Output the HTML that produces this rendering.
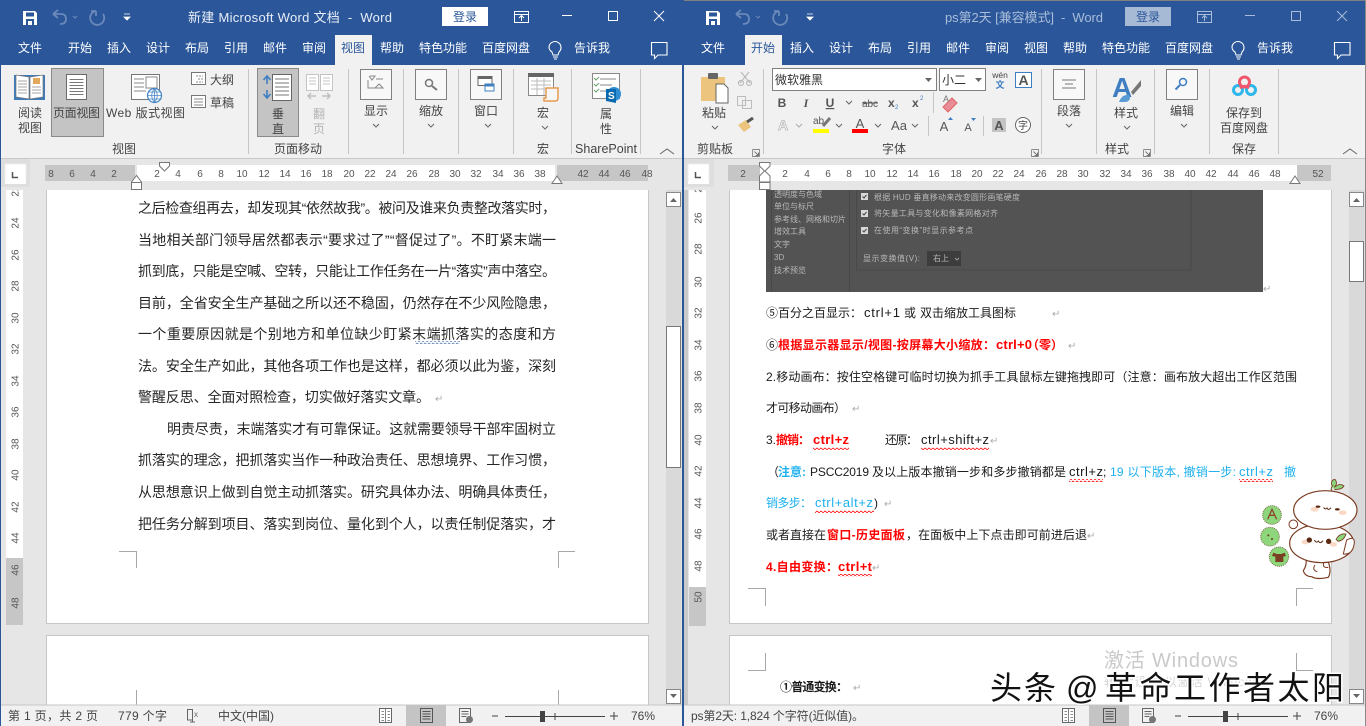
<!DOCTYPE html>
<html lang="zh"><head><meta charset="utf-8"><title>Word</title>
<style>
html,body{margin:0;padding:0;background:#e6e6e6;width:1366px;height:726px;overflow:hidden}
svg{display:block;position:absolute;left:0;top:0}
text{font-family:"Liberation Sans","Noto Sans CJK SC",sans-serif;white-space:pre}
.m{text-anchor:middle}
.t{font-size:12px;fill:#fff}
.l{font-size:12px;fill:#444}
.a{font-size:12px;fill:#2b579a}
.r{font-size:10px;fill:#555;text-anchor:middle}
.d{font-size:14px;fill:#262626}
.e{font-size:12px;fill:#1a1a1a}
.x{font-size:13px}
.b{font-weight:bold;fill:#f00}
.c{fill:#1fb0ee}
.p{font-size:10px;fill:#aaa}
.s{font-size:12px;fill:#444}
.g{font-size:8px;fill:#b8b8b8}
.ln{stroke:#c6c6c6;stroke-width:1;fill:none}
.bx{fill:#fff;stroke:#808080;stroke-width:1}
.cv{fill:none;stroke:#666;stroke-width:1}
</style></head><body>
<svg xmlns="http://www.w3.org/2000/svg" width="1366" height="726" viewBox="0 0 1366 726">
<defs>
<pattern id="w" width="4" height="3" patternUnits="userSpaceOnUse"><path d="M0 2L1 1L3 2.6L4 2" fill="none" stroke="#f00" stroke-width=".8"/></pattern>
<pattern id="wb" width="4" height="3" patternUnits="userSpaceOnUse"><path d="M0 2L1 1L3 2.6L4 2" fill="none" stroke="#5b7fb5" stroke-width=".8"/></pattern>
<g id="save"><path d="M0 0H12L14 2V14H0Z" fill="#fff"/><rect x="3" y="1.5" width="8" height="4" fill="#2b579a"/><rect x="3" y="8" width="8" height="6" fill="#2b579a"/><rect x="5" y="10" width="4" height="4" fill="#fff"/></g>
<g id="qat"><path d="M53 14L58 10M53 14L58 18M53 14H61Q66 14 66 19Q66 24 60 24" fill="none" stroke="#6a89ba" stroke-width="1.8"/><path d="M73 16l2 2 2-2" fill="none" stroke="#6a89ba"/><path d="M96 11A7 7 0 1 0 103 14M96 11V16M96 11H91" fill="none" stroke="#6a89ba" stroke-width="1.8"/><path d="M124 14h6M124 17h6l-3 3z" fill="#fff" stroke="#fff" stroke-width=".8"/></g>
<g id="bulb"><path d="M0 6A6 6 0 1 1 10 11L9 14H4L3 11A6 6 0 0 1 0 6ZM4 16H9M5 18H8" fill="none" stroke="#fff" stroke-width="1.1"/></g>
<g id="cmt"><path d="M.5 .5H16V13H7L3.5 16.5V13H.5Z" fill="none" stroke="#fff" stroke-width="1.1"/></g>
<path id="ch" d="M0 0l3 3 3-3" fill="none" stroke="#666"/>
<path id="drop" d="M0 0h7l-3.500 4z" fill="#666"/>
<g id="launch"><path d="M0 0H7V7M0 0V7H7" fill="none" stroke="#888" stroke-width=".9"/><path d="M2 2L6 6M6 3V6H3" fill="none" stroke="#555" stroke-width=".8"/></g>
<g id="cup"><path d="M0 5L7 0L14 5" fill="none" stroke="#666" stroke-width="1"/></g>
<g id="pl"><path d="M0 0H20V25H0Z" fill="#fff" stroke="#6a6a6a"/><path d="M3 5H17M3 8H17M3 11H17M3 14H17M3 17H17M3 20H17" stroke="#777" stroke-width="1"/></g>
<g id="rd"><rect width="12" height="14" fill="#fff" stroke="#666"/><path d="M6 0V14M2 3H4.500M2 6H4.500M2 9H4.500M2 12H4.500M8 3H10.500M8 6H10.500M8 9H10.500M8 12H10.500" stroke="#666" stroke-width=".8"/></g>
<g id="pr"><rect width="12" height="14" fill="none" stroke="#555"/><path d="M2 3H10M2 5.500H10M2 8H10M2 10.500H10" stroke="#555"/></g>
<g id="wb2"><rect width="11" height="14" fill="none" stroke="#666"/><path d="M2 3H9M2 5.500H9M2 8H7" stroke="#666"/><circle cx="10" cy="11" r="3.500" fill="#777"/></g>
</defs>

<!-- left window -->
<rect x="0" y="0" width="684" height="726" fill="#e6e6e6"/>
<rect x="0" y="0" width="684" height="65" fill="#2b579a"/>
<rect x="0" y="65" width="684" height="93" fill="#f1f1f1"/>
<rect x="0" y="158" width="684" height="1" fill="#c8c8c8"/>
<use href="#save" x="23" y="11"/><use href="#qat"/>
<text class="t" x="188" y="22" textLength="204" style="fill:#e8eef7;font-size:13px">新建 Microsoft Word 文档  -  Word</text>
<rect x="442" y="7" width="46" height="19" fill="#fff"/>
<text class="a m" x="465" y="21">登录</text>
<path d="M514.500 11.500H528.500V22.500H514.500ZM514.500 14.500H528.500M521.500 21V16M519 18L521.500 15.500L524 18" fill="none" stroke="#fff"/>
<path d="M562 15.500H572" stroke="#fff"/>
<rect x="608.500" y="11.500" width="9" height="9" fill="none" stroke="#fff"/>
<path d="M654 11L664 21M664 11L654 21" stroke="#fff" stroke-width="1"/>
<rect x="335" y="35" width="37" height="30" fill="#f1f1f1"/>
<text class="t" x="18" y="52">文件</text><text class="t" x="68" y="52">开始</text><text class="t" x="107" y="52">插入</text><text class="t" x="146" y="52">设计</text><text class="t" x="185" y="52">布局</text><text class="t" x="224" y="52">引用</text><text class="t" x="263" y="52">邮件</text><text class="t" x="302" y="52">审阅</text><text class="a" x="341" y="52">视图</text><text class="t" x="380" y="52">帮助</text><text class="t" x="419" y="52">特色功能</text><text class="t" x="482" y="52">百度网盘</text><text class="t" x="574" y="52">告诉我</text>
<use href="#bulb" x="549" y="41"/><use href="#cmt" x="651" y="42"/>

<!-- left ribbon: view -->
<path d="M14 75H45V100H14Z" fill="#3d7ab8"/><path d="M16 75L29 77V99L16 97ZM43 75L30 77V99L43 97Z" fill="#fff" stroke="#777" stroke-width=".7"/><path d="M18 81H27M18 84H27M18 87H27M18 90H27M18 93H27M32 87H41M32 90H41M32 93H41" stroke="#888" stroke-width=".8"/><rect x="33" y="78" width="7" height="6" fill="#e3a85c"/>
<rect x="51.500" y="68.500" width="52" height="68" fill="#c4c4c4" stroke="#8a8a8a"/>
<use href="#pl" x="66.500" y="74.500"/>
<text class="l m" x="30" y="117">阅读</text><text class="l m" x="30" y="132">视图</text>
<text class="l" x="53" y="117" textLength="47">页面视图</text>
<text class="l" x="106" y="117" textLength="79">Web 版式视图</text>
<rect x="131.500" y="74.500" width="28" height="25" fill="#fff" stroke="#777"/><path d="M134 79H144M134 83H144M134 87H144M134 91H146" stroke="#888"/><rect x="146" y="77" width="11" height="11" fill="none" stroke="#888"/>
<circle cx="154.500" cy="95.500" r="7" fill="#fff" stroke="#4a88c7" stroke-width="1.300"/><path d="M147.500 95.500H161.500M154.500 88.500V102.500M149 92H160M149 99H160M154.500 88.500Q149 95.500 154.500 102.500Q160 95.500 154.500 88.500" fill="none" stroke="#4a88c7" stroke-width=".8"/>
<rect x="191.500" y="72.500" width="14" height="12" fill="#fff" stroke="#777"/><path d="M196 76H203M198 79H203M196 82H203" stroke="#888" stroke-dasharray="2 1"/>
<rect x="191.500" y="95.500" width="14" height="12" fill="#fff" stroke="#777"/><path d="M194 99H203M194 102H203M194 105H203" stroke="#888"/>
<text class="l" x="210" y="84">大纲</text><text class="l" x="210" y="107">草稿</text>
<text class="l m" x="124" y="153">视图</text>
<path class="ln" d="M248.500 69V154M348.500 69V154M403.500 69V154M458.500 69V154M513.500 69V154M571.500 69V154M640.500 69V154"/>
<rect x="257.500" y="68.500" width="41" height="68" fill="#c4c4c4" stroke="#8a8a8a"/>
<rect x="272.500" y="74.500" width="19" height="26" fill="#fff" stroke="#666"/><path d="M275 79H289M275 83H289M275 87H289M275 91H289M275 95H289" stroke="#777"/>
<path d="M267 76V84M263.500 80L267 76L270.500 80M267 90V98M263.500 94L267 98L270.500 94" fill="none" stroke="#3f7fc1" stroke-width="1.600"/>
<text class="l m" x="278" y="118">垂</text><text class="l m" x="278" y="133">直</text>
<path d="M306.500 74.500H318.500V90.500H306.500ZM320.500 74.500H332.500V90.500H320.500ZM309 78H316M309 81H316M309 84H316M323 78H330M323 81H330M323 84H330" fill="#fff" stroke="#c4c4c4"/>
<path d="M308 96H316M311 93L308 96L311 99M322 96H330M327 93L330 96L327 99" fill="none" stroke="#c0c0c0" stroke-width="1.500"/>
<text class="m" x="319" y="118" style="font-size:12px;fill:#b4b4b4">翻</text><text class="m" x="319" y="133" style="font-size:12px;fill:#b4b4b4">页</text>
<text class="l m" x="298" y="153">页面移动</text>
<rect x="360.500" y="69.500" width="31" height="30" class="bx" style="fill:#f8f8f8"/><path d="M370 76H375L372 80L369 76M368 80V88H375M376 79H383M379 84L375 88H383Z" fill="none" stroke="#888"/>
<rect x="415.500" y="69.500" width="31" height="30" class="bx" style="fill:#f8f8f8"/><circle cx="429" cy="83" r="3.500" fill="none" stroke="#777" stroke-width="1.500"/><path d="M432 86L437 90" stroke="#777" stroke-width="2"/>
<rect x="470.500" y="69.500" width="31" height="30" class="bx" style="fill:#f8f8f8"/><rect x="478" y="76.500" width="14" height="9" fill="#fff" stroke="#666"/><rect x="478" y="76.500" width="14" height="2.500" fill="#666"/><rect x="485" y="84" width="9" height="7" fill="#fff" stroke="#3f7fc1"/><rect x="485" y="84" width="9" height="2.500" fill="#3f7fc1"/>
<text class="l m" x="376" y="115">显示</text><text class="l m" x="431" y="115">缩放</text><text class="l m" x="486" y="115">窗口</text>
<use href="#ch" x="373" y="124"/><use href="#ch" x="428" y="124"/><use href="#ch" x="485" y="124"/>
<rect x="528.500" y="73.500" width="25" height="22" fill="#fff" stroke="#888"/><rect x="528" y="73" width="26" height="4" fill="#666"/><path d="M531 81H551M531 85H551M531 89H551M537 78V95M544 78V95" stroke="#bbb"/>
<path d="M546 88H558V98Q558 101 555 101H544V98H546Z" fill="#f6f6f6" stroke="#e69a50" stroke-width="1.500"/>
<text class="l m" x="543" y="117">宏</text><use href="#ch" x="542" y="126"/>
<text class="l m" x="543" y="153">宏</text>
<rect x="592.500" y="73.500" width="27" height="25" fill="#fff" stroke="#888"/><path d="M600 79H616M600 85H612M600 91H606" stroke="#888"/><path d="M594 78l2 2 3-3M594 84l2 2 3-3M594 90l2 2 3-3" fill="none" stroke="#6a9f6a"/>
<circle cx="614" cy="94" r="7" fill="#2f8ed4"/><path d="M606 89H616V103L606 101Z" fill="#0a6ab0"/><text x="608" y="99" style="font-size:10px;font-weight:bold;fill:#fff">S</text>
<text class="l m" x="606" y="118">属</text><text class="l m" x="606" y="133">性</text>
<text class="l" x="575" y="153" textLength="62" style="font-size:12.500px">SharePoint</text>
<use href="#cup" x="660" y="149"/>

<!-- left ruler -->
<rect x="0" y="159" width="30" height="28" fill="#dedede"/>
<rect x="5" y="164" width="21" height="20" fill="#fff" stroke="#ececec"/>
<path d="M12.500 172V177.500H18" fill="none" stroke="#555" stroke-width="1.500"/>
<rect x="45" y="165" width="90" height="16" fill="#c6c6c6"/><rect x="137" y="165" width="418" height="16" fill="#fff"/><rect x="557" y="165" width="91" height="16" fill="#c6c6c6"/>
<text class="r" x="51" y="177">8</text><text class="r" x="72" y="177">6</text><text class="r" x="93" y="177">4</text><text class="r" x="114" y="177">2</text><text class="r" x="157" y="177">2</text><text class="r" x="178" y="177">4</text><text class="r" x="200" y="177">6</text><text class="r" x="221" y="177">8</text><text class="r" x="242" y="177">10</text><text class="r" x="264" y="177">12</text><text class="r" x="285" y="177">14</text><text class="r" x="306" y="177">16</text><text class="r" x="327" y="177">18</text><text class="r" x="349" y="177">20</text><text class="r" x="370" y="177">22</text><text class="r" x="391" y="177">24</text><text class="r" x="412" y="177">26</text><text class="r" x="434" y="177">28</text><text class="r" x="455" y="177">30</text><text class="r" x="476" y="177">32</text><text class="r" x="498" y="177">34</text><text class="r" x="519" y="177">36</text><text class="r" x="540" y="177">38</text><text class="r" x="583" y="177">42</text><text class="r" x="604" y="177">44</text><text class="r" x="625" y="177">46</text><text class="r" x="647" y="177">48</text>

<!-- left doc -->
<rect x="6" y="190" width="17" height="368" fill="#fff"/><rect x="6" y="558" width="17" height="67" fill="#c6c6c6"/>
<text class="r" transform="translate(15,191) rotate(-90)" y="3.500">22</text><text class="r" transform="translate(15,223) rotate(-90)" y="3.500">24</text><text class="r" transform="translate(15,255) rotate(-90)" y="3.500">26</text><text class="r" transform="translate(15,286) rotate(-90)" y="3.500">28</text><text class="r" transform="translate(15,318) rotate(-90)" y="3.500">30</text><text class="r" transform="translate(15,349) rotate(-90)" y="3.500">32</text><text class="r" transform="translate(15,381) rotate(-90)" y="3.500">34</text><text class="r" transform="translate(15,412) rotate(-90)" y="3.500">36</text><text class="r" transform="translate(15,444) rotate(-90)" y="3.500">38</text><text class="r" transform="translate(15,475) rotate(-90)" y="3.500">40</text><text class="r" transform="translate(15,507) rotate(-90)" y="3.500">42</text><text class="r" transform="translate(15,538) rotate(-90)" y="3.500">44</text><text class="r" transform="translate(15,570) rotate(-90)" y="3.500">46</text><text class="r" transform="translate(15,603) rotate(-90)" y="3.500">48</text>
<rect x="46.500" y="189" width="602" height="434.500" fill="#fff" stroke="#c6c6c6"/>
<rect x="46.500" y="635.500" width="602" height="80" fill="#fff" stroke="#c6c6c6"/>
<rect x="0" y="181" width="684" height="9" fill="#e6e6e6"/>
<rect x="0" y="181" width="30" height="6" fill="#dedede"/>
<rect x="5" y="181" width="21" height="3" fill="#fff"/>
<path d="M159.500 162.500H169.500V166L164.500 171L159.500 166Z" fill="#fff" stroke="#777"/>
<path d="M131.500 182L136.500 175.500L141.500 182V189.500H131.500ZM131.500 182.500H141.500" fill="#fff" stroke="#777"/>
<path d="M552 183.500L557 176L562 183.500Z" fill="#fff" stroke="#777"/>
<path d="M119 551.500H136.500V568M575 551.500H558.500V568M136.500 690V705M558.500 690V705" fill="none" stroke="#a8a8a8"/>
<text class="d" x="138" y="213" textLength="418">之后检查组再去，却发现其“依然故我”。被问及谁来负责整改落实时，</text>
<text class="d" x="138" y="245" textLength="418">当地相关部门领导居然都表示“要求过了”“督促过了”。不盯紧末端一</text>
<text class="d" x="138" y="276" textLength="418">抓到底，只能是空喊、空转，只能让工作任务在一片“落实”声中落空。</text>
<text class="d" x="138" y="308" textLength="418">目前，全省安全生产基础之所以还不稳固，仍然存在不少风险隐患，</text>
<text class="d" x="138" y="339" textLength="418">一个重要原因就是个别地方和单位缺少盯紧末端抓落实的态度和方</text>
<rect x="415" y="341" width="45" height="3" fill="url(#wb)"/>
<text class="d" x="138" y="371" textLength="418">法。安全生产如此，其他各项工作也是这样，都必须以此为鉴，深刻</text>
<text class="d" x="138" y="402" textLength="292">警醒反思、全面对照检查，切实做好落实文章。</text><text class="p" x="435" y="402">↵</text>
<text class="d" x="167" y="434" textLength="389">明责尽责，末端落实才有可靠保证。这就需要领导干部牢固树立</text>
<text class="d" x="138" y="465" textLength="418">抓落实的理念，把抓落实当作一种政治责任、思想境界、工作习惯，</text>
<text class="d" x="138" y="497" textLength="418">从思想意识上做到自觉主动抓落实。研究具体办法、明确具体责任，</text>
<text class="d" x="138" y="529" textLength="418">把任务分解到项目、落实到岗位、量化到个人，以责任制促落实，才</text>
<!-- left scroll -->
<rect x="666" y="190" width="15.500" height="515" fill="#d9d9d9"/>
<rect x="666.500" y="192.500" width="14" height="14" fill="#fff" stroke="#888"/><path d="M670 202h7l-3.500-4z" fill="#666"/>
<rect x="666.500" y="326.500" width="14" height="141" fill="#fff" stroke="#777"/>
<rect x="666.500" y="689.500" width="14" height="14" fill="#fff" stroke="#888"/><use href="#drop" x="670" y="694"/>
<!-- left status -->
<rect x="0" y="705" width="684" height="21" fill="#f1f1f1"/><rect x="0" y="704.500" width="684" height="1" fill="#c6c6c6"/>
<text class="s" x="8" y="720" textLength="90">第 1 页，共 2 页</text>
<text class="s" x="118" y="720" textLength="49">779 个字</text>
<path d="M187.500 709.500H192.500V720H187.500ZM192.500 720V722M190 722H195" fill="none" stroke="#666"/><text x="194" y="717" style="font-size:8px;fill:#666">x</text>
<text class="s" x="218" y="720" textLength="56">中文(中国)</text>
<use href="#rd" x="379.500" y="708.500"/>
<rect x="406" y="705" width="40" height="21" fill="#c4c4c4"/><use href="#pr" x="420.500" y="708.500"/>
<use href="#wb2" x="459.500" y="708.500"/>
<path d="M492 716H498M505 716.500H605M555 713V720M614 712V720M610 716H618" fill="none" stroke="#444"/>
<rect x="540" y="711" width="5" height="11" fill="#444"/>
<text class="s" x="631" y="720">76%</text>
<rect x="0" y="0" width="1" height="726" fill="#2b579a"/><rect x="682" y="0" width="2" height="726" fill="#2b579a"/>

<!-- right window -->
<rect x="684" y="0" width="682" height="726" fill="#e6e6e6"/>
<rect x="684" y="0" width="682" height="65" fill="#2b579a"/>
<rect x="684" y="0" width="682" height="1" fill="#7f7f7f"/>
<rect x="684" y="65" width="682" height="93" fill="#f1f1f1"/>
<rect x="684" y="158" width="682" height="1" fill="#c8c8c8"/>
<use href="#save" x="706" y="11"/><use href="#qat" x="683"/>
<text class="t" x="945" y="22" textLength="158" style="fill:#a9bcd9;font-size:13px">ps第2天 [兼容模式]  -  Word</text>
<rect x="1125" y="7" width="46" height="19" fill="#a6bad6"/>
<text class="a m" x="1148" y="21">登录</text>
<path d="M1197.500 11.500H1211.500V22.500H1197.500ZM1197.500 14.500H1211.500M1204.500 21V16M1202 18L1204.500 15.500L1207 18" fill="none" stroke="#a9bcd9"/>
<path d="M1245 15.500H1255" stroke="#a9bcd9"/>
<rect x="1291.500" y="11.500" width="9" height="9" fill="none" stroke="#a9bcd9"/>
<path d="M1337 11L1347 21M1347 11L1337 21" stroke="#a9bcd9"/>
<rect x="745" y="35" width="37" height="30" fill="#f1f1f1"/>
<text class="t" x="701" y="52">文件</text><text class="a" x="751" y="52">开始</text><text class="t" x="790" y="52">插入</text><text class="t" x="829" y="52">设计</text><text class="t" x="868" y="52">布局</text><text class="t" x="907" y="52">引用</text><text class="t" x="946" y="52">邮件</text><text class="t" x="985" y="52">审阅</text><text class="t" x="1024" y="52">视图</text><text class="t" x="1063" y="52">帮助</text><text class="t" x="1102" y="52">特色功能</text><text class="t" x="1165" y="52">百度网盘</text><text class="t" x="1257" y="52">告诉我</text>
<use href="#bulb" x="1232" y="41"/><use href="#cmt" x="1334" y="42"/>

<!-- right ribbon -->
<path d="M701 77H725V101H701Z" fill="#edc47e"/><rect x="708" y="73" width="10" height="6" fill="#666" rx="1"/>
<path d="M716 84H724L728 88V103H716Z" fill="#fff" stroke="#666"/>
<text class="l m" x="714" y="117">粘贴</text><use href="#ch" x="712" y="126"/>
<path d="M741 72L750 83M749 72L740 83" stroke="#bdbdbd" stroke-width="1.300"/><circle cx="741" cy="83" r="2.500" fill="none" stroke="#bdbdbd" stroke-width="1.200"/><circle cx="749" cy="83" r="2.500" fill="none" stroke="#bdbdbd" stroke-width="1.200"/>
<path d="M737.500 96.500H745.500V105.500H737.500ZM742.500 100.500H751.500V108.500H742.500Z" fill="#f1f1f1" stroke="#bdbdbd"/>
<path d="M738 125L746 120L751 127L744 132Z" fill="#edc47e"/><path d="M747 122L753 118" stroke="#555" stroke-width="3"/>
<text class="l" x="697" y="153" textLength="36">剪贴板</text><use href="#launch" x="752.500" y="149.500"/>
<path class="ln" d="M763.500 69V154M1041.500 69V154M1096.500 69V154M1154.500 69V154M1209.500 69V154M1278.500 69V154"/>
<rect x="772.500" y="68.500" width="164" height="22" class="bx"/>
<text class="l" x="775" y="84" textLength="48" style="fill:#333">微软雅黑</text><use href="#drop" x="925" y="78"/>
<rect x="939.500" y="68.500" width="46" height="22" class="bx"/>
<text class="l" x="942" y="84" textLength="24" style="fill:#333">小二</text><use href="#drop" x="975" y="78"/>
<text class="m" x="1000" y="78" style="font-size:8.500px;fill:#444">wén</text><text class="m" x="1000" y="88" style="font-size:9px;fill:#3f7fc1;font-weight:bold">文</text>
<rect x="1015.500" y="72.500" width="16" height="15" fill="#fff" stroke="#3f7fc1"/><text class="m" x="1023.500" y="85" style="font-size:14px;fill:#555;font-weight:bold">A</text>
<text class="m" x="782" y="107" style="font-size:12px;font-weight:bold;fill:#555">B</text>
<text class="m" x="806" y="107" style="font-size:12px;font-style:italic;font-weight:bold;fill:#555;font-family:'Liberation Serif',serif">I</text>
<text class="m" x="830" y="107" style="font-size:12px;font-weight:bold;fill:#555;text-decoration:underline">U</text><use href="#ch" x="846" y="101"/>
<text class="m" x="870" y="107" style="font-size:10px;fill:#555">abc</text><path d="M862 103H878" stroke="#555"/>
<text x="888" y="107" style="font-size:12px;font-weight:bold;fill:#555">x</text><text x="895" y="109" style="font-size:6px;fill:#3f7fc1">2</text>
<text x="912" y="107" style="font-size:12px;font-weight:bold;fill:#555">x</text><text x="920" y="100" style="font-size:6px;fill:#3f7fc1">2</text>
<path class="ln" d="M933.500 92V113M928.500 116V136M983.500 116V136"/>
<path d="M943 107L952 98L957 103L948 112Z" fill="#e98c98" stroke="#d66"/><text x="943" y="102" style="font-size:9px;fill:#777">A</text>
<text class="m" x="783" y="130" style="font-size:14px;font-weight:bold;fill:#f6f6f6;stroke:#bbb;stroke-width:.8">A</text><use href="#ch" x="796" y="124" style="opacity:.5"/>
<text x="813" y="124" style="font-size:10px;fill:#555">ab</text><path d="M823 126L830 118" stroke="#777" stroke-width="3"/><rect x="813" y="129" width="16" height="4" fill="#ff0"/><use href="#ch" x="836" y="124"/>
<text class="m" x="860" y="128" style="font-size:13px;fill:#555">A</text><rect x="852" y="129" width="16" height="4" fill="#f00"/><use href="#ch" x="875" y="124"/>
<text class="m" x="899" y="130" style="font-size:13px;fill:#555">Aa</text><use href="#ch" x="912" y="124"/>
<text class="m" x="944" y="131" style="font-size:13px;fill:#555">A</text><path d="M948 120h5l-2.500-3z" fill="#3f7fc1"/>
<text class="m" x="968" y="131" style="font-size:11px;fill:#555">A</text><path d="M971 118h5l-2.500 3z" fill="#3f7fc1"/>
<rect x="992" y="118" width="14" height="14" fill="#c4c4c4"/><text class="m" x="999" y="130" style="font-size:13px;font-weight:bold;fill:#555">A</text>
<circle cx="1023" cy="125" r="7.500" fill="#fff" stroke="#666"/><text class="m" x="1023" y="129" style="font-size:10px;fill:#444">字</text>
<text class="l m" x="894" y="153">字体</text><use href="#launch" x="1031.500" y="149.500"/>
<rect x="1053.500" y="69.500" width="31" height="30" class="bx" style="fill:#f8f8f8"/><path d="M1062 80H1076M1065 84H1073M1062 88H1076" stroke="#777"/>
<text class="l m" x="1069" y="115">段落</text><use href="#ch" x="1066" y="124"/>
<text x="1112" y="97" style="font-size:28px;font-weight:bold;fill:#3f7fc1">A</text><path d="M1131 92L1141 80V86L1133 95Z" fill="#777"/><path d="M1119 102Q1122 94 1129 95Q1132 100 1126 102Z" fill="#5b9bd5"/>
<text class="l m" x="1126" y="117">样式</text><use href="#ch" x="1124" y="126"/>
<text class="l m" x="1117" y="153">样式</text><use href="#launch" x="1143.500" y="149.500"/>
<rect x="1166.500" y="69.500" width="31" height="30" class="bx" style="fill:#f8f8f8"/><circle cx="1183" cy="82" r="3.500" fill="none" stroke="#3f7fc1" stroke-width="1.500"/><path d="M1180 85L1175.500 89.500" stroke="#3f7fc1" stroke-width="2"/>
<text class="l m" x="1182" y="115">编辑</text><use href="#ch" x="1181" y="124"/>
<circle cx="1238" cy="90" r="4.500" fill="none" stroke="#2fb6ea" stroke-width="3"/><circle cx="1251" cy="90" r="4.500" fill="none" stroke="#2fb6ea" stroke-width="3"/><circle cx="1244.500" cy="82" r="5" fill="none" stroke="#f0566c" stroke-width="3"/><path d="M1240 88L1244.500 86L1249 88" fill="none" stroke="#f0566c" stroke-width="2.500"/>
<text class="l m" x="1244" y="117">保存到</text><text class="l m" x="1244" y="132">百度网盘</text><text class="l m" x="1244" y="153">保存</text>
<use href="#cup" x="1343" y="149"/>

<!-- right ruler -->
<rect x="684" y="159" width="30" height="28" fill="#dedede"/>
<rect x="688" y="164" width="21" height="20" fill="#fff" stroke="#ececec"/>
<path d="M695.500 172V177.500H701" fill="none" stroke="#555" stroke-width="1.500"/>
<rect x="728" y="165" width="32" height="16" fill="#c6c6c6"/><rect x="760" y="165" width="537" height="16" fill="#fff"/><rect x="1297" y="165" width="34" height="16" fill="#c6c6c6"/>
<text class="r" x="743" y="177">2</text><text class="r" x="785" y="177">2</text><text class="r" x="807" y="177">4</text><text class="r" x="828" y="177">6</text><text class="r" x="849" y="177">8</text><text class="r" x="870" y="177">10</text><text class="r" x="892" y="177">12</text><text class="r" x="913" y="177">14</text><text class="r" x="934" y="177">16</text><text class="r" x="956" y="177">18</text><text class="r" x="977" y="177">20</text><text class="r" x="998" y="177">22</text><text class="r" x="1019" y="177">24</text><text class="r" x="1041" y="177">26</text><text class="r" x="1062" y="177">28</text><text class="r" x="1083" y="177">30</text><text class="r" x="1105" y="177">32</text><text class="r" x="1126" y="177">34</text><text class="r" x="1147" y="177">36</text><text class="r" x="1169" y="177">38</text><text class="r" x="1190" y="177">40</text><text class="r" x="1211" y="177">42</text><text class="r" x="1233" y="177">44</text><text class="r" x="1254" y="177">46</text><text class="r" x="1275" y="177">48</text><text class="r" x="1318" y="177">52</text>

<!-- right doc -->
<rect x="684" y="190" width="4" height="536" fill="#c9c9c9"/>
<rect x="689" y="190" width="17" height="397" fill="#fff"/><rect x="689" y="587" width="17" height="39" fill="#c6c6c6"/>
<text class="r" transform="translate(698,187) rotate(-90)" y="3.500">24</text><text class="r" transform="translate(698,218) rotate(-90)" y="3.500">26</text><text class="r" transform="translate(698,249) rotate(-90)" y="3.500">28</text><text class="r" transform="translate(698,282) rotate(-90)" y="3.500">30</text><text class="r" transform="translate(698,313) rotate(-90)" y="3.500">32</text><text class="r" transform="translate(698,345) rotate(-90)" y="3.500">34</text><text class="r" transform="translate(698,376) rotate(-90)" y="3.500">36</text><text class="r" transform="translate(698,408) rotate(-90)" y="3.500">38</text><text class="r" transform="translate(698,440) rotate(-90)" y="3.500">40</text><text class="r" transform="translate(698,471) rotate(-90)" y="3.500">42</text><text class="r" transform="translate(698,503) rotate(-90)" y="3.500">44</text><text class="r" transform="translate(698,534) rotate(-90)" y="3.500">46</text><text class="r" transform="translate(698,566) rotate(-90)" y="3.500">48</text><text class="r" transform="translate(698,597) rotate(-90)" y="3.500">50</text>
<rect x="729.500" y="189" width="602" height="434.500" fill="#fff" stroke="#c6c6c6"/>
<rect x="729.500" y="635.500" width="602" height="80" fill="#fff" stroke="#c6c6c6"/>
<rect x="684" y="181" width="682" height="9" fill="#e6e6e6"/>
<rect x="684" y="181" width="30" height="6" fill="#dedede"/>
<rect x="688" y="181" width="21" height="3" fill="#fff"/>
<path d="M759.500 162.500H770V166L765 171L770 176V182H759.500V176L764.500 171L759.500 166ZM759.500 182.500H770V189.500H759.500Z" fill="#fff" stroke="#777"/>
<path d="M1290 183.500L1295 176L1300 183.500Z" fill="#fff" stroke="#777"/>
<path d="M748 588.500H765.500V606M1313 588.500H1296.500V606M748 670.500H765.500V653M1313 670.500H1296.500V653" fill="none" stroke="#a8a8a8"/>
<!-- dark image -->
<rect x="766" y="190" width="497" height="102" fill="#535353"/>
<path d="M771.500 190V292M849.500 190V292" stroke="#484848"/><path d="M856.500 190V270H1191V190" fill="none" stroke="#494949"/>
<text class="g" x="774" y="197">透明度与色域</text><text class="g" x="774" y="209">单位与标尺</text><text class="g" x="774" y="222">参考线、网格和切片</text><text class="g" x="774" y="234">增效工具</text><text class="g" x="774" y="247">文字</text><text class="g" x="774" y="260">3D</text><text class="g" x="774" y="273">技术预览</text>
<rect x="861" y="193" width="7" height="7" fill="#d8d8d8"/><rect x="861" y="210" width="7" height="7" fill="#d8d8d8"/><rect x="861" y="227" width="7" height="7" fill="#d8d8d8"/>
<path d="M862.500 196.500l1.500 1.500 2.500-3M862.500 213.500l1.500 1.500 2.500-3M862.500 230.500l1.500 1.500 2.500-3" fill="none" stroke="#444"/>
<text class="g" x="874" y="200" textLength="146">根据 HUD 垂直移动来改变圆形画笔硬度</text>
<text class="g" x="874" y="216" textLength="124">将矢量工具与变化和像素网格对齐</text>
<text class="g" x="874" y="233" textLength="99">在使用“变换”时显示参考点</text>
<text class="g" x="863" y="261" textLength="57">显示变换值(V):</text>
<rect x="927" y="251" width="34" height="15" fill="#3d3d3d"/><text class="g" x="933" y="261">右上</text><path d="M955 258l2 2 2-2" fill="none" stroke="#999"/>
<text class="p" x="1263" y="292">↵</text>
<!-- right text -->
<text class="e" x="766" y="317">⑤百分之百显示：</text><text class="e x" x="864" y="317" textLength="36">ctrl+1</text><text class="e" x="904" y="317">或</text><text class="e" x="920" y="317">双击缩放工具图标</text><text class="p" x="1052" y="317">↵</text>
<text class="e" x="766" y="349">⑥</text><text class="e b" x="778" y="349" textLength="217">根据显示器显示/视图-按屏幕大小缩放：</text><text class="e x b" x="996" y="349" textLength="36">ctrl+0</text><text class="e b" x="1027" y="349">（零）</text><text class="p" x="1068" y="349">↵</text>
<text class="e" x="766" y="381" textLength="531">2.移动画布：按住空格键可临时切换为抓手工具鼠标左键拖拽即可（注意：画布放大超出工作区范围</text>
<text class="e" x="766" y="412" textLength="80">才可移动画布）</text><text class="p" x="852" y="412">↵</text>
<text class="e" x="766" y="444">3.</text><text class="e b" x="776" y="444" textLength="34">撤销：</text><text class="e x b" x="813" y="444" textLength="36">ctrl+z</text><text class="e" x="885" y="444" textLength="33">还原：</text><text class="e x" x="921" y="444" textLength="68">ctrl+shift+z</text><text class="p" x="990" y="444">↵</text>
<rect x="813" y="447" width="36" height="3" fill="url(#w)"/><rect x="921" y="447" width="68" height="3" fill="url(#w)"/>
<text class="e" x="767" y="476">（</text><text class="e c" x="778" y="476" textLength="28" style="font-weight:bold">注意:</text><text class="e" x="810" y="476" textLength="59">PSCC2019</text><text class="e" x="872" y="476" textLength="194">及以上版本撤销一步和多步撤销都是</text><text class="e x" x="1069" y="476" textLength="34">ctrl+z</text><text class="e" x="1103" y="476">;</text><text class="e c" x="1110" y="476" textLength="126">19 以下版本, 撤销一步:</text><text class="e x c" x="1239" y="476" textLength="34">ctrl+z</text><text class="e c" x="1284" y="476">撤</text>
<rect x="1069" y="479" width="34" height="3" fill="url(#w)"/><rect x="1239" y="479" width="34" height="3" fill="url(#w)"/>
<text class="e c" x="766" y="507" textLength="46">销多步：</text><text class="e x c" x="815" y="507" textLength="58">ctrl+alt+z</text><text class="e" x="874" y="507">)</text><text class="p" x="884" y="507">↵</text>
<rect x="815" y="510" width="59" height="3" fill="url(#w)"/>
<text class="e" x="766" y="539" textLength="60">或者直接在</text><text class="e b" x="827" y="539" textLength="78">窗口-历史面板</text><text class="e" x="906" y="539" textLength="181">，在面板中上下点击即可前进后退</text><text class="p" x="1087" y="539">↵</text>
<text class="e b" x="766" y="571" textLength="72">4.自由变换：</text><text class="e x b" x="838" y="571" textLength="34">ctrl+t</text><text class="p" x="872" y="571">↵</text>
<rect x="838" y="574" width="34" height="3" fill="url(#w)"/>
<text class="e" x="780" y="691" textLength="68" style="font-weight:bold">①普通变换：</text><text class="p" x="853" y="691">↵</text>
<!-- right scroll -->
<rect x="1349" y="190" width="15.500" height="515" fill="#d9d9d9"/>
<rect x="1349.500" y="192.500" width="14" height="14" fill="#fff" stroke="#888"/><path d="M1353 202h7l-3.500-4z" fill="#666"/>
<rect x="1349.500" y="241.500" width="14" height="40" fill="#fff" stroke="#777"/>
<rect x="1349.500" y="689.500" width="14" height="14" fill="#fff" stroke="#888"/><use href="#drop" x="1353" y="694"/>
<!-- cartoon -->
<g transform="translate(1200 460) scale(.3333)">
<g fill="#8dd67b" stroke="#7a6a4a" stroke-width="3" stroke-dasharray="3 3"><circle cx="216" cy="165" r="28"/><circle cx="210" cy="230" r="28"/><circle cx="237" cy="290" r="29"/></g>
<path d="M203 178L216 148L230 178M208 166H224" fill="none" stroke="#8a4a30" stroke-width="4"/>
<circle cx="205" cy="226" r="3" fill="#6b3a20"/><circle cx="216" cy="237" r="3" fill="#6b3a20"/>
<path d="M220 278L230 282H244L254 278L258 288L250 290V306H226V290L216 288Z" fill="#7a3e22"/>
<path d="M318 290Q322 315 310 332Q315 350 335 350Q350 360 385 352Q395 335 385 305L350 300Z" fill="#fff" stroke="#7a3a20" stroke-width="3.500"/>
<path d="M345 315Q335 330 352 335M372 305Q365 325 385 322" fill="none" stroke="#7a3a20" stroke-width="3"/>
<ellipse cx="365" cy="250" rx="96" ry="58" fill="#fff" stroke="#7a3a20" stroke-width="3.500"/>
<path d="M440 240Q468 225 462 255Q456 285 430 282Z" fill="#fff" stroke="#7a3a20" stroke-width="3"/>
<ellipse cx="376" cy="150" rx="95" ry="58" fill="#fff" stroke="#7a3a20" stroke-width="3.500"/>
<circle cx="280" cy="193" r="13" fill="#fff" stroke="#7a3a20" stroke-width="3"/>
<path d="M395 92Q390 84 400 75M395 75Q392 60 405 58Q415 70 403 82Q420 68 432 78Q425 90 403 88" fill="#8dd67b" stroke="#7a3a20" stroke-width="2.500"/>
<ellipse cx="344" cy="148" rx="12" ry="7" fill="#fbd9c6"/><ellipse cx="428" cy="158" rx="12" ry="7" fill="#fbd9c6"/><ellipse cx="316" cy="246" rx="11" ry="7" fill="#fbd9c6"/><ellipse cx="400" cy="253" rx="11" ry="7" fill="#fbd9c6"/>
<ellipse cx="354" cy="140" rx="7" ry="3.500" fill="#5a2a14"/><ellipse cx="412" cy="148" rx="7" ry="3.500" fill="#5a2a14"/><path d="M371 142q5 9 10 2q5 9 12-1" fill="none" stroke="#5a2a14" stroke-width="3"/>
<circle cx="328" cy="240" r="8" fill="#5a2a14"/><circle cx="386" cy="244" r="8" fill="#5a2a14"/><path d="M343 240q6 11 12 3q6 10 14-1" fill="none" stroke="#5a2a14" stroke-width="3"/>
<path d="M408 238Q420 218 438 222Q432 242 414 244Z" fill="#8dd67b" stroke="#7a3a20" stroke-width="2.500"/>
</g>
<!-- activation + watermark -->
<text x="1104" y="667" textLength="134" style="font-size:20px;fill:#c9c9c9">激活 Windows</text>
<text x="1104" y="686" textLength="170" style="font-size:12px;fill:#d4d4d4">转到“设置”以激活 Windows。</text>
<!-- right status -->
<rect x="684" y="705" width="682" height="21" fill="#f1f1f1"/><rect x="684" y="704.500" width="682" height="1" fill="#c6c6c6"/>
<text class="s" x="691" y="720" textLength="173">ps第2天: 1,824 个字符(近似值)。</text>
<use href="#rd" x="1062.500" y="708.500"/>
<rect x="1089" y="705" width="40" height="21" fill="#c4c4c4"/><use href="#pr" x="1103.500" y="708.500"/>
<use href="#wb2" x="1142.500" y="708.500"/>
<path d="M1175 716H1181M1188 716.500H1288M1238 713V720M1297 712V720M1293 716H1301" fill="none" stroke="#444"/>
<rect x="1223" y="711" width="5" height="11" fill="#444"/>
<text class="s" x="1314" y="720">76%</text>
<rect x="1365" y="0" width="1" height="726" fill="#8a8a8a"/>
<g stroke="#fff" stroke-width="3" fill="#111">
<text x="990" y="699" textLength="66" style="font-size:32px;paint-order:stroke">头条</text>
<text x="1066" y="699" style="font-size:32px;paint-order:stroke">@</text>
<text x="1105" y="699" textLength="239" style="font-size:32px;paint-order:stroke">革命工作者太阳</text>
</g>
</svg>
</body></html>
